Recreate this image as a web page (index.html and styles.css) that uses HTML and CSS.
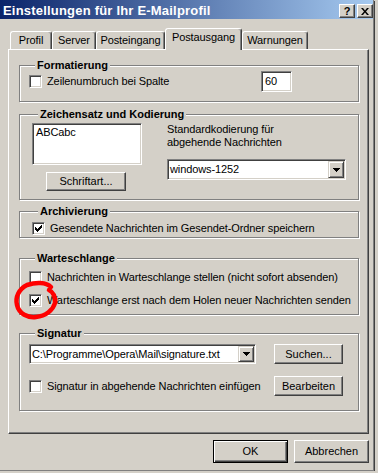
FILE: index.html
```html
<!DOCTYPE html>
<html lang="de">
<head>
  <meta charset="UTF-8">
  <title>Einstellungen für Ihr E-Mailprofil</title>
  <link rel="stylesheet" href="styles.css">
</head>
<body>
  <div class="window">
    <!-- Title bar -->
    <div class="titlebar">
      <span class="title">Einstellungen für Ihr E-Mailprofil</span>
      <div class="caption-buttons">
        <span class="cbtn">?</span>
        <span class="cbtn">
          <svg width="8" height="7" viewBox="0 0 8 7"><path d="M0 0h2l2 2.5 2-2.5h2l-3 3.5 3 3.5h-2l-2-2.5-2 2.5h-2l3-3.5z"/></svg>
        </span>
      </div>
    </div>

    <!-- Tabs -->
    <div class="tabs">
      <div class="tab tab-profil">Profil</div>
      <div class="tab tab-server">Server</div>
      <div class="tab tab-eingang">Posteingang</div>
      <div class="tab tab-ausgang active">Postausgang</div>
      <div class="tab tab-warn">Warnungen</div>
    </div>

    <div class="panel">
      <!-- Formatierung -->
      <div class="group group-format">
        <div class="legend">Formatierung</div>
        <div class="row format-row">
          <span class="check"></span>
          <span class="label grow">Zeilenumbruch bei Spalte</span>
          <span class="field col-input">60</span>
        </div>
      </div>

      <!-- Zeichensatz -->
      <div class="group group-charset">
        <div class="legend">Zeichensatz und Kodierung</div>
        <div class="charset">
          <div class="charset-left">
            <div class="field listbox">ABCabc</div>
            <button class="btn btn-font">Schriftart...</button>
          </div>
          <div class="charset-right">
            <div class="enc-label">Standardkodierung für<br>abgehende Nachrichten</div>
            <div class="field combo combo-enc">
              <span class="combo-text">windows-1252</span>
              <span class="combo-btn">
                <svg width="7" height="4" viewBox="0 0 7 4"><path d="M0 0h7v1h-1v1h-1v1h-1v1h-1v-1h-1v-1h-1v-1h-1z"/></svg>
              </span>
            </div>
          </div>
        </div>
      </div>

      <!-- Archivierung -->
      <div class="group group-archive">
        <div class="legend">Archivierung</div>
        <div class="row archive-row">
          <span class="check">
            <svg width="7" height="7" viewBox="0 0 7 7"><path d="M0 2h1v1h1v1h1v-1h1v-1h1v-1h1v-1h1v3h-1v1h-1v1h-1v1h-1v1h-1v-1h-1v-1h-1z"/></svg>
          </span>
          <span class="label">Gesendete Nachrichten im Gesendet-Ordner speichern</span>
        </div>
      </div>

      <!-- Warteschlange -->
      <div class="group group-queue">
        <div class="legend">Warteschlange</div>
        <div class="row queue-row">
          <span class="check"></span>
          <span class="label">Nachrichten in Warteschlange stellen (nicht sofort absenden)</span>
        </div>
        <div class="row row-second">
          <span class="check">
            <svg width="7" height="7" viewBox="0 0 7 7"><path d="M0 2h1v1h1v1h1v-1h1v-1h1v-1h1v-1h1v3h-1v1h-1v1h-1v1h-1v1h-1v-1h-1v-1h-1z"/></svg>
          </span>
          <span class="label">Warteschlange erst nach dem Holen neuer Nachrichten senden</span>
        </div>
      </div>

      <!-- Signatur -->
      <div class="group group-sig">
        <div class="legend">Signatur</div>
        <div class="sig-row sig-row-first">
          <div class="field combo combo-sig">
            <span class="combo-text">C:\Programme\Opera\Mail\signature.txt</span>
            <span class="combo-btn">
              <svg width="7" height="4" viewBox="0 0 7 4"><path d="M0 0h7v1h-1v1h-1v1h-1v1h-1v-1h-1v-1h-1v-1h-1z"/></svg>
            </span>
          </div>
          <button class="btn btn-side">Suchen...</button>
        </div>
        <div class="sig-row sig-row-second">
          <div class="sig-check">
            <span class="check"></span>
            <span class="label">Signatur in abgehende Nachrichten einfügen</span>
          </div>
          <button class="btn btn-side">Bearbeiten</button>
        </div>
      </div>
    </div>

    <!-- Dialog buttons -->
    <div class="footer">
      <button class="btn btn-dialog btn-default">OK</button>
      <button class="btn btn-dialog">Abbrechen</button>
    </div>

    <!-- red marker drawn over the screenshot -->
    <svg class="marker" width="378" height="473" viewBox="0 0 378 473">
      <path d="M51 287 C46 282 36 282 27 285 C19 289 15 297 17 305 C19 314 28 318 36 317 C46 316 53 310 55 303 C56 297 53 292 49 290" fill="none" stroke="#ff0000" stroke-width="4.5" stroke-linecap="round"/>
    </svg>
  </div>
</body>
</html>
```

FILE: styles.css
```css
html, body {
  margin: 0;
  padding: 0;
}

body {
  background-color: #d4d0c8;
  font-family: "Liberation Sans", Arial, sans-serif;
  font-size: 11px;
  line-height: 13px;
  letter-spacing: -0.1px;
  color: #000;
}

.window {
  position: relative;
  width: 374px;
  height: 471px;
  box-sizing: border-box;
  border-right: 1px solid #808080;
  border-bottom: 1px solid #808080;
  box-shadow: 1px 1px 0 #404040;
}

/* Title bar */
.titlebar {
  height: 19px;
  display: flex;
  align-items: center;
  padding: 0 0 0 3px;
  background: linear-gradient(to right, #0a246a, #a6caf0);
}
.title {
  flex: 1;
  color: #fff;
  font-weight: bold;
  font-size: 13px;
  letter-spacing: 0.2px;
  margin-top: 1px;
}
.caption-buttons {
  display: flex;
  gap: 2px;
  margin-top: 3px;
}
.cbtn {
  width: 16px;
  height: 14px;
  box-sizing: border-box;
  display: flex;
  align-items: center;
  justify-content: center;
  background-color: #d4d0c8;
  border: 1px solid;
  border-color: #fff #404040 #404040 #fff;
  box-shadow: inset -1px -1px #808080;
  font-weight: bold;
  font-size: 11px;
}

/* Tabs */
.tabs {
  display: flex;
  align-items: flex-end;
  height: 21px;
  margin-top: 9px;
  padding-left: 10px;
}
.tab {
  height: 18px;
  box-sizing: border-box;
  border: 1px solid;
  border-bottom: none;
  border-color: #fff #404040 transparent #fff;
  box-shadow: inset -1px 0 #808080;
  border-radius: 3px 3px 0 0;
  text-align: center;
  padding-top: 2px;
}
.tab-profil { width: 42px; }
.tab-server { width: 44px; }
.tab-eingang { width: 69px; }
.tab-ausgang { width: 77px; }
.tab-warn { width: 66px; }
.tab.active {
  position: relative;
  height: 22px;
  margin-bottom: -1px;
  background-color: #d4d0c8;
  padding-top: 2px;
}

.panel {
  width: 361px;
  height: 385px;
  margin-left: 8px;
  box-sizing: border-box;
  border: 1px solid;
  border-color: #fff #404040 #404040 #fff;
  box-shadow: inset -1px -1px #808080;
  padding: 1px 8px 0 10px;
}

/* Group boxes */
.group {
  border: 1px solid #808080;
  box-shadow: inset 1px 1px #fff, 1px 1px 0 #fff;
  margin-right: 1px;
}
.legend {
  width: fit-content;
  margin: -7px 0 -6px 6px;
  padding: 0 2px;
  background-color: #d4d0c8;
  font-weight: bold;
  letter-spacing: 0;
}

.row {
  display: flex;
  align-items: center;
}
.label {
  margin-left: 5px;
  white-space: nowrap;
}
.grow {
  flex: 1;
}

.check {
  width: 13px;
  height: 13px;
  flex: none;
  box-sizing: border-box;
  display: flex;
  align-items: center;
  justify-content: center;
  background-color: #fff;
  border: 1px solid;
  border-color: #808080 #fff #fff #808080;
  box-shadow: inset 1px 1px #404040, inset -1px -1px #d4d0c8;
}

.field {
  box-sizing: border-box;
  background-color: #fff;
  border: 1px solid;
  border-color: #808080 #fff #fff #808080;
  box-shadow: inset 1px 1px #404040, inset -1px -1px #d4d0c8;
}

.group-format {
  margin-top: 14px;
  padding: 0 0 9px 9px;
}
.format-row {
  margin-top: 5px;
}
.col-input {
  width: 31px;
  height: 21px;
  padding: 3px 0 0 3px;
  margin-right: 66px;
}

.group-charset {
  margin-top: 12px;
  padding: 0 0 8px 12px;
}
.charset {
  display: flex;
}
.charset-left {
  width: 110px;
  padding-top: 8px;
}
.listbox {
  height: 42px;
  padding: 2px 3px;
}
.btn {
  font: inherit;
  color: #000;
  background-color: #d4d0c8;
  border: 1px solid;
  border-color: #fff #404040 #404040 #fff;
  box-shadow: inset -1px -1px #808080;
  padding: 0;
  box-sizing: border-box;
}
.btn-font {
  display: block;
  width: 80px;
  height: 19px;
  margin: 7px 0 0 14px;
}
.charset-right {
  margin-left: 25px;
  padding-top: 8px;
}
.enc-label {
  height: 26px;
}
.combo {
  display: flex;
  padding: 1px;
}
.combo-text {
  flex: 1;
  padding-left: 1px;
  white-space: nowrap;
  overflow: hidden;
  display: flex;
  align-items: center;
}
.combo-btn {
  width: 16px;
  display: flex;
  align-items: center;
  justify-content: center;
  box-sizing: border-box;
  background-color: #d4d0c8;
  border: 1px solid;
  border-color: #d4d0c8 #404040 #404040 #d4d0c8;
  box-shadow: inset 1px 1px #fff, inset -1px -1px #808080;
}
.combo-enc {
  width: 179px;
  height: 21px;
  margin-top: 10px;
}

.group-archive {
  margin-top: 11px;
  padding: 0 0 2px 12px;
}
.archive-row {
  margin-top: 10px;
}

.group-queue {
  margin-top: 20px;
  padding: 0 0 7px 9px;
}
.queue-row {
  margin-top: 12px;
}
.row-second {
  margin-top: 10px;
}

.group-sig {
  margin-top: 18px;
  padding: 0 0 14px 9px;
}
.sig-row {
  display: flex;
  align-items: center;
}
.sig-row-first {
  margin-top: 10px;
}
.sig-row-second {
  margin-top: 12px;
}
.combo-sig {
  width: 227px;
  height: 20px;
}
.sig-check {
  width: 227px;
  display: flex;
  align-items: center;
}
.btn-side {
  width: 69px;
  height: 20px;
  margin-left: 18px;
}

/* Dialog buttons */
.footer {
  display: flex;
  gap: 6px;
  padding: 6px 0 0 213px;
}
.btn-dialog {
  width: 75px;
  height: 23px;
}
.btn-default {
  border: 1px solid #000;
  box-shadow: inset 1px 1px #fff, inset -1px -1px #404040, inset -2px -2px #808080;
}

.marker {
  position: absolute;
  left: 0;
  top: 0;
  pointer-events: none;
}
```
